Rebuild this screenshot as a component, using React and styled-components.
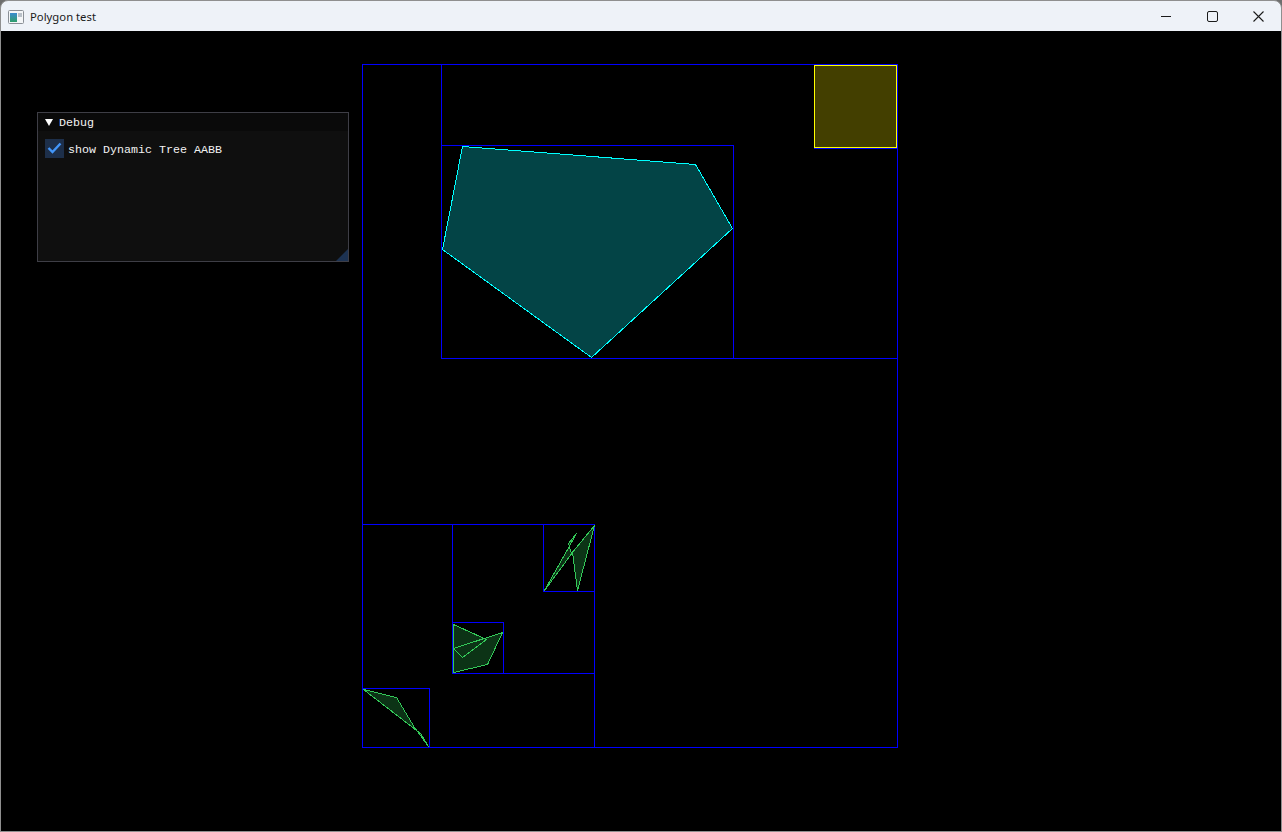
import styled, { createGlobalStyle } from "styled-components";

const GlobalStyle = createGlobalStyle`
    html, body {
        margin: 0;
        padding: 0;
        background: #6e6e6e;
        overflow: hidden;
    }
    * {
        box-sizing: border-box;
    }
`

const Frame = styled.div`
    width: 1282px;
    height: 832px;
    display: flex;
    flex-direction: column;
    border: 1px solid #8f8f8f;
    border-radius: 8px 8px 0 0;
    overflow: hidden;
    background-color: #eef2f8;
`

const TitleBar = styled.div`
    height: 30px;
    display: flex;
    align-items: center;
    flex-shrink: 0;
    font-family: "Segoe UI", "Noto Sans", sans-serif;
    font-size: 11.3px;
    color: #1b1b1b;
`

const AppIcon = styled.svg`
    margin-left: 7px;
    margin-top: 1px;
`

const Title = styled.span`
    margin-left: 6px;
    margin-top: 1px;
`

const Controls = styled.div`
    margin-left: auto;
    display: flex;
    height: 100%;
`

const CaptionButton = styled.div`
    width: 46px;
    height: 30px;
    display: flex;
    align-items: center;
    justify-content: center;
`

const Canvas = styled.div`
    position: relative;
    flex: 1;
    background-color: #000;
`

const Scene = styled.svg`
    display: block;
    shape-rendering: crispEdges;
`

const ImWindow = styled.div`
    position: absolute;
    left: 36px;
    top: 81px;
    width: 312px;
    height: 150px;
    display: flex;
    flex-direction: column;
    border: 1px solid #3e3e46;
    background-color: #0f0f0f;
    font-family: "Liberation Mono", "DejaVu Sans Mono", monospace;
    font-size: 11.67px;
    color: #f2f2f2;
`

const ImTitle = styled.div`
    height: 18px;
    display: flex;
    align-items: center;
    gap: 6px;
    padding-left: 7px;
    background-color: #0a0a0a;
`

const Arrow = styled.span`
    width: 0;
    height: 0;
    border-left: 4px solid transparent;
    border-right: 4px solid transparent;
    border-top: 7px solid #fff;
    margin-top: 1px;
`

const ImText = styled.span`
    padding-top: 2px;
`

const ImBody = styled.div`
    flex: 1;
    padding: 8px 7px;
`

const CheckRow = styled.label`
    display: flex;
    align-items: center;
    gap: 4px;
`

const CheckBox = styled.span`
    width: 19px;
    height: 19px;
    display: flex;
    background-color: #1d2f4a;
`

const Grip = styled.span`
    position: absolute;
    right: 0;
    bottom: 0;
    width: 0;
    height: 0;
    border-left: 12px solid transparent;
    border-bottom: 12px solid #1c3252;
`

// pixel-inclusive box -> crisp 1px rect
const box = (x1, y1, x2, y2) => ({ x: x1 + 0.5, y: y1 + 0.5, width: x2 - x1, height: y2 - y1 })

const aabbs = [
    [362, 64, 897, 747],
    [441, 64, 897, 358],
    [441, 145, 733, 358],
    [814, 64, 897, 148],
    [362, 524, 594, 747],
    [452, 524, 594, 673],
    [543, 524, 594, 591],
    [452, 622, 503, 673],
    [362, 688, 429, 747],
]

const greens = [
    "544.5,590.5 576.5,533.5 568.5,543.5 571.5,553.5 594.5,525.5 577.5,590.5 572.5,552.5",
    "453.5,624.5 486.5,639.5 462.5,657.5 453.5,648.5 502.5,632.5 487.5,664.5 453.5,672.5",
    "363.5,689.5 396.5,697.5 414.5,727.5 428.5,746.5 420.5,733.5",
]

export default function App() {
    return (
        <>
            <GlobalStyle />
            <Frame>
                <TitleBar>
                    <AppIcon width="16" height="14" viewBox="0 0 16 14">
                        <defs>
                            <linearGradient id="ic" x1="0" y1="0" x2="0" y2="1">
                                <stop offset="0" stopColor="#3a8bd0" />
                                <stop offset="1" stopColor="#2f9e6a" />
                            </linearGradient>
                        </defs>
                        <rect x="0.5" y="0.5" width="15" height="13" rx="1" fill="#f4f6f8" stroke="#8a8f96" />
                        <rect x="2" y="3" width="7" height="9" fill="url(#ic)" />
                        <rect x="10" y="3" width="4" height="4" fill="#b9c0c8" />
                    </AppIcon>
                    <Title>Polygon test</Title>
                    <Controls>
                        <CaptionButton>
                            <svg width="10" height="10" viewBox="0 0 10 10">
                                <line x1="0" y1="5.5" x2="10" y2="5.5" stroke="#1b1b1b" />
                            </svg>
                        </CaptionButton>
                        <CaptionButton>
                            <svg width="11" height="11" viewBox="0 0 11 11">
                                <rect x="0.5" y="0.5" width="10" height="10" rx="1.5" fill="none" stroke="#1b1b1b" />
                            </svg>
                        </CaptionButton>
                        <CaptionButton>
                            <svg width="11" height="11" viewBox="0 0 11 11">
                                <path d="M0.5 0.5 L10.5 10.5 M10.5 0.5 L0.5 10.5" stroke="#1b1b1b" strokeWidth="1.1" />
                            </svg>
                        </CaptionButton>
                    </Controls>
                </TitleBar>
                <Canvas>
                    <Scene width="1280" height="800" viewBox="1 31 1280 800">
                        {aabbs.map((b, i) => (
                            <rect key={i} {...box(...b)} fill="none" stroke="#0000ff" />
                        ))}
                        <polygon
                            points="462.5,146.5 695.5,164.5 732.5,228.5 591.5,357.5 442.5,249.5"
                            fill="#034446"
                            stroke="#00ffff"
                        />
                        {greens.map((p, i) => (
                            <polygon key={i} points={p} fill="#0c3316" stroke="#33c858" />
                        ))}
                        <rect {...box(814, 65, 896, 147)} fill="#433f00" stroke="#ffff00" />
                    </Scene>
                    <ImWindow>
                        <ImTitle>
                            <Arrow />
                            <ImText>Debug</ImText>
                        </ImTitle>
                        <ImBody>
                            <CheckRow>
                                <CheckBox>
                                    <svg width="19" height="19" viewBox="0 0 19 19">
                                        <polyline points="3.5,9 7.5,13 15.5,4.5" fill="none" stroke="#4296fa" strokeWidth="2.4" />
                                    </svg>
                                </CheckBox>
                                <ImText>show Dynamic Tree AABB</ImText>
                            </CheckRow>
                        </ImBody>
                        <Grip />
                    </ImWindow>
                </Canvas>
            </Frame>
        </>
    )
}
